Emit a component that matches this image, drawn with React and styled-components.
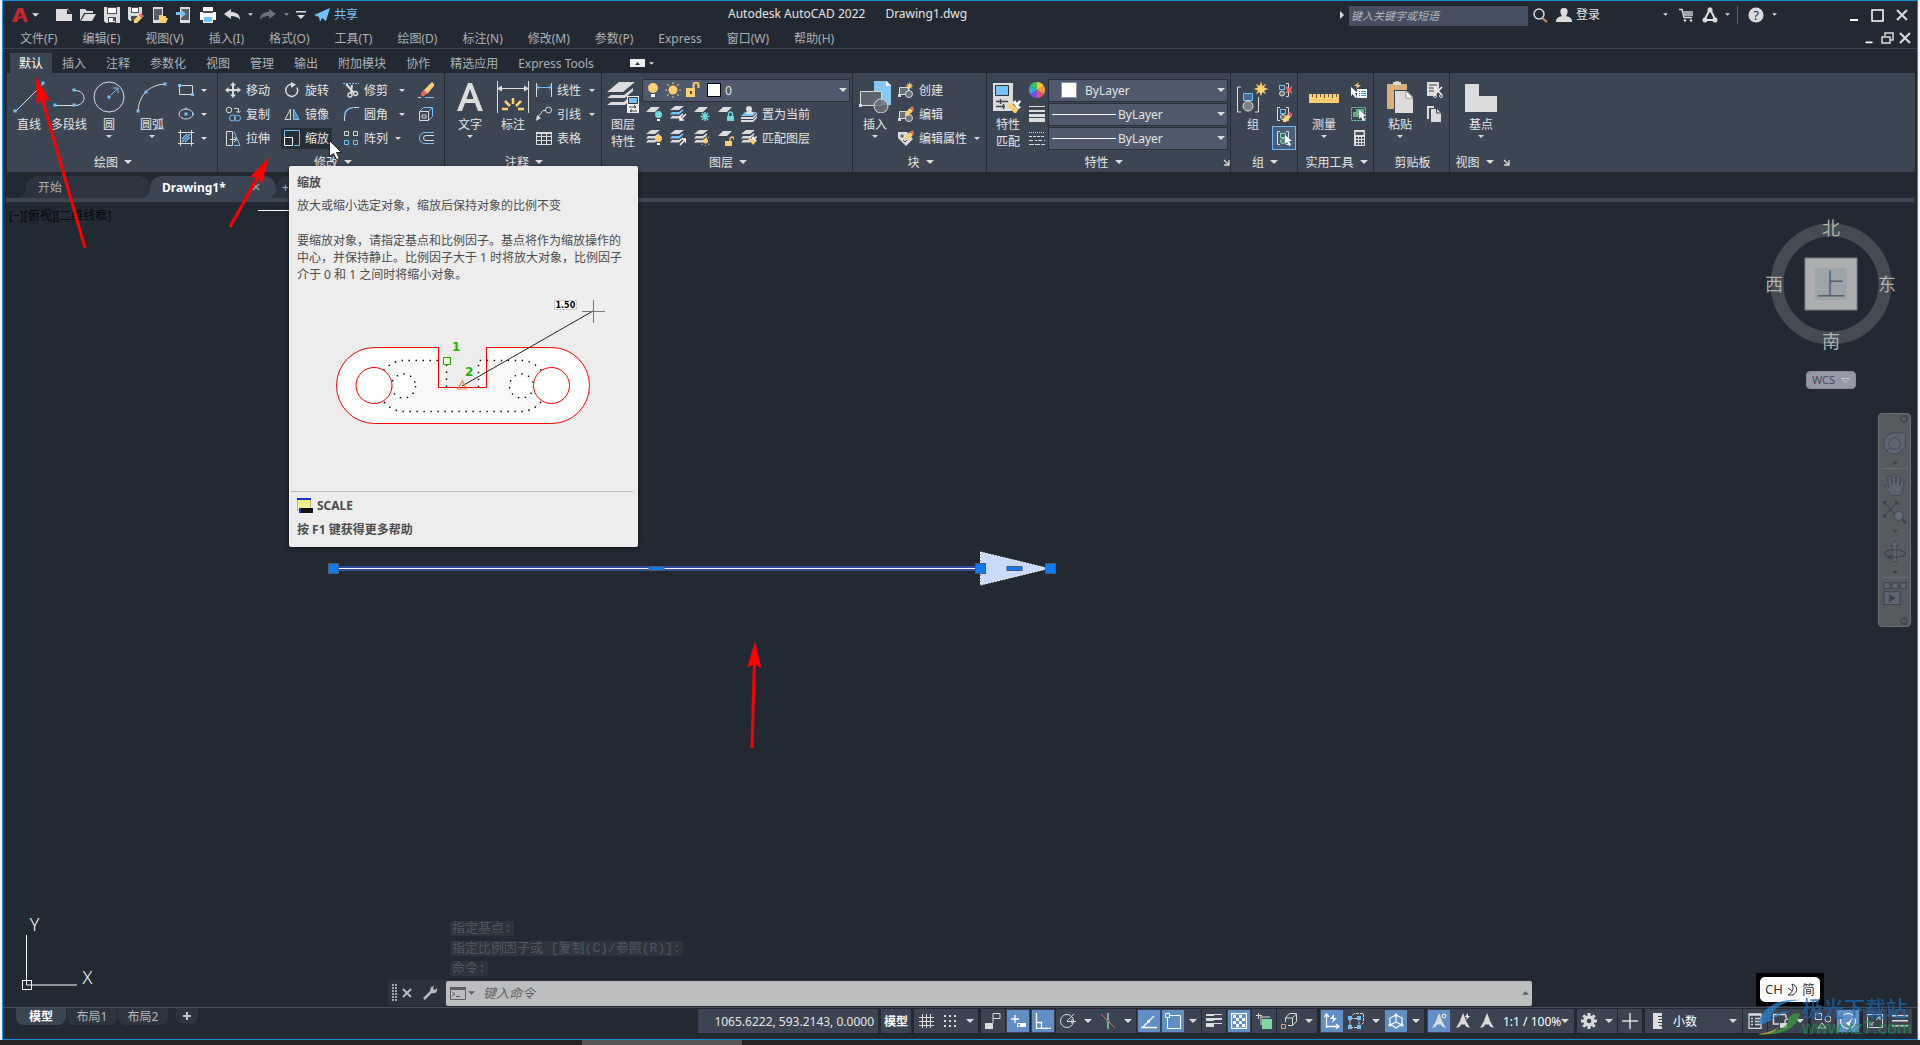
import React, { useState } from 'react';
import styled, { createGlobalStyle } from 'styled-components';

const W = '#dcdcdc';
const B = '#73c2fb';
const Y = '#ffcf70';
const R = '#f26060';
const G = '#7fd8a0';
const T = '#6fd8e0';

const GlobalStyle = createGlobalStyle`
  * {
    box-sizing: border-box;
  }
  body {
    margin: 0;
    background: #f4f5f6;
    font-family: 'Noto Sans', 'Noto Sans CJK SC', sans-serif;
    font-size: 12px;
    line-height: 17px;
    color: #e6e6e6;
  }
  button, input, select {
    font: inherit;
    color: inherit;
    margin: 0;
    padding: 0;
    border: none;
    background: none;
  }
  svg {
    display: block;
    flex: none;
  }
`;

const Page = styled.div`
  position: relative;
  display: flex;
  flex-direction: column;
  min-height: 100vh;
  overflow: hidden;
`;

const Window = styled.div`
  flex: 1;
  display: flex;
  flex-direction: column;
  margin: 0 2px;
  border: 1px solid #0f92d8;
  background: #222932;
`;

const DesktopStrip = styled.div`
  height: 5px;
  padding-left: 582px;
  background: #262224;
`;

const DesktopThumb = styled.div`
  width: 160px;
  height: 5px;
  background: #575455;
`;

const TitleBar = styled.header`
  position: relative;
  display: flex;
  align-items: center;
  justify-content: space-between;
  height: 27px;
  padding: 0 3px 0 10px;
`;

const QuickAccess = styled.div`
  display: flex;
  align-items: center;
`;

const IconButton = styled.button`
  display: flex;
  align-items: center;
  justify-content: center;
  width: ${({ $w }) => $w || 24}px;
  height: 24px;
`;

const ShareLink = styled.a`
  color: #79c0f5;
  text-decoration: none;
`;

const WindowTitle = styled.h1`
  position: absolute;
  left: 725px;
  top: 4px;
  display: flex;
  gap: 20px;
  margin: 0;
  font-size: 12px;
  font-weight: 400;
`;

const InfoCenter = styled.div`
  display: flex;
  align-items: center;
`;

const SearchInput = styled.input`
  width: 179px;
  height: 20px;
  margin-top: 2px;
  padding: 0 2px;
  background: #464f61;
  font-size: 11px;
  font-style: italic;

  &::placeholder {
    color: #b4b8be;
    opacity: 1;
  }
`;

const LoginButton = styled.button`
  width: 80px;
  text-align: left;
`;

const Divider = styled.span`
  width: 1px;
  height: 18px;
  margin: 0 6px 0 5px;
  background: #566074;
`;

const MenuBar = styled.nav`
  display: flex;
  align-items: center;
  height: 21px;
  padding: 0 3px 0 17px;
  border-bottom: 1px solid #3c4454;
`;

const MenuItem = styled.a`
  margin-right: 25px;
  color: #adb1b6;
  text-decoration: none;
`;

const DocControls = styled.div`
  display: flex;
  margin-left: auto;
`;

const RibbonTabs = styled.div`
  display: flex;
  align-items: flex-end;
  height: 24px;
  padding-left: 7px;
`;

const RibbonTab = styled.button`
  height: 20px;
  padding: 0 ${({ $active }) => ($active ? 9 : 10)}px;
  background: ${({ $active }) => ($active ? '#3c4554' : 'transparent')};
  color: ${({ $active }) => ($active ? '#fff' : '#aeb2b7')};
`;

const RibbonToggle = styled.button`
  display: flex;
  align-items: center;
  gap: 4px;
  height: 20px;
  margin-left: 26px;
`;

const Ribbon = styled.section`
  display: flex;
  height: 99px;
  margin: 0 2px 0 4px;
  background: #3c4554;
`;

const Panel = styled.div`
  display: flex;
  flex-direction: column;
  padding-left: ${({ $pad }) => $pad || 2}px;
  border-right: ${({ $last }) => ($last ? 'none' : '1px solid #252c37')};
`;

const PanelBody = styled.div`
  display: flex;
  height: 77px;
  padding-top: 5px;
`;

const PanelTitle = styled.div`
  display: flex;
  align-items: center;
  justify-content: center;
  height: 22px;
  padding-top: 2px;
  gap: 6px;
`;

const TitleButton = styled.button`
  flex: 1;
  display: flex;
  align-items: center;
  justify-content: center;
  gap: 6px;
`;

const LargeTool = styled.button`
  display: flex;
  flex-direction: column;
  align-items: center;
  width: ${({ $w }) => $w}px;
  padding-top: 3px;
  white-space: nowrap;

  span {
    width: 28px;
    margin-top: 3px;
    display: flex;
    flex-wrap: ${({ $wrap }) => ($wrap ? 'wrap' : 'nowrap')};
    justify-content: center;
    white-space: ${({ $wrap }) => ($wrap ? 'normal' : 'nowrap')};
  }

  svg + span + svg {
    margin-top: 2px;
  }
`;

const Column = styled.div`
  width: ${({ $w }) => $w}px;
  display: flex;
  flex-direction: column;
`;

const ToolRow = styled.div`
  display: flex;
  align-items: center;
  height: 24px;
`;

const SmallTool = styled.button`
  display: flex;
  align-items: center;
  gap: 5px;
  height: ${({ $selected }) => ($selected ? 22 : 21)}px;
  padding: 0 3px;
  white-space: nowrap;
  background: ${({ $hover, $selected }) => ($hover ? '#262e38' : $selected ? '#465d7c' : 'transparent')};
  outline: ${({ $selected }) => ($selected ? '1px solid #6fb8f2' : 'none')};
`;

const ArrowButton = styled.button`
  display: flex;
  justify-content: center;
  width: ${({ $w }) => $w || 16}px;
`;

const Combo = styled.div`
  position: relative;
  display: flex;
  align-items: center;
  width: ${({ $w }) => $w}px;
  height: 23px;
  border: 1px solid #2a313d;
  background: #4e596d;
  gap: 4px;
  padding-left: ${({ $pad }) => $pad}px;

  select {
    flex: 1;
    min-width: 0;
    height: 20px;
    appearance: none;
    outline: none;
  }

  select + svg {
    position: absolute;
    right: 2px;
    pointer-events: none;
  }
`;

const Swatch = styled.span`
  width: ${({ $s }) => $s}px;
  height: ${({ $s }) => $s}px;
  margin: 0 ${({ $gap }) => $gap}px 0 2px;
  border: 1px solid ${({ $edge }) => $edge};
  background: #fff;
`;

const LineSample = styled.span`
  width: 64px;
  height: 1px;
  margin-right: -2px;
  background: #fff;
`;

const DocTabs = styled.div`
  display: flex;
  align-items: flex-end;
  height: 30px;
  padding-left: 20px;
  margin: 0 3px;
  border-bottom: 4px solid #3c4554;
`;

const DocTab = styled.div`
  position: relative;
  display: flex;
  align-items: center;
  justify-content: space-between;
  width: ${({ $w }) => $w}px;
  height: 22px;
  padding: 0 16px 0 ${({ $w }) => ($w > 60 ? 12 : 6)}px;
  border-radius: 12px 12px 0 0;
  background: ${({ $active }) => ($active ? '#3c4554' : '#2d3440')};
  color: ${({ $active }) => ($active ? '#fff' : '#adb1b6')};
  font-weight: ${({ $active }) => ($active ? 700 : 400)};

  &::before {
    content: '';
    position: absolute;
    left: -9px;
    bottom: 0;
    width: 9px;
    height: 9px;
    background: radial-gradient(circle at 0 0, transparent 9px, ${({ $active }) => ($active ? '#3c4554' : '#2d3440')} 9px);
  }
`;

const Canvas = styled.main`
  position: relative;
  flex: 1;
  border-bottom: 1px solid #474e5a;
  background: #222932;
`;

const ViewLabel = styled.div`
  position: absolute;
  left: 6px;
  top: 5px;
  color: #07090b;
`;

const Sketch = styled.svg`
  position: absolute;
  left: 0;
  top: 0;
`;

const Ucs = styled.svg`
  position: absolute;
  left: 14px;
  bottom: 12px;
`;

const ViewCube = styled.div`
  position: absolute;
  right: 16px;
  top: 12px;
  display: flex;
  flex-direction: column;
  align-items: center;
  gap: 17px;
`;

const WcsButton = styled.button`
  display: flex;
  align-items: center;
  gap: 6px;
  height: 18px;
  padding: 0 5px;
  border-radius: 4px;
  background: #9698a6;
  border: 1px solid #8a8c99;
  color: #484b55;
  font-size: 11px;
  line-height: 14px;
`;

const NavBar = styled.div`
  position: absolute;
  right: 6px;
  top: 211px;
  display: flex;
  flex-direction: column;
  align-items: center;
  width: 33px;
  height: 214px;
  border: 1px solid #6a7074;
  border-radius: 4px;
  background: #565b60;
`;

const CommandArea = styled.div`
  position: absolute;
  left: 385px;
  right: 385px;
  bottom: 1px;
`;

const History = styled.div`
  display: flex;
  flex-direction: column;
  align-items: flex-start;
  gap: 5px;
  padding: 0 0 4px 62px;

  span {
    height: 15px;
    padding: 0 2px;
    border-radius: 2px;
    background: #2e343d;
    color: #50565e;
    font-family: 'Liberation Mono', 'Noto Sans CJK SC', monospace;
    font-size: 13px;
    line-height: 15px;
  }
`;

const CommandLine = styled.div`
  display: flex;
  align-items: center;
  height: 26px;
  border-radius: 2px;
  background: #2b313d;
`;

const CommandField = styled.div`
  flex: 1;
  display: flex;
  align-items: center;
  height: 25px;
  padding: 0 3px 0 4px;
  border-radius: 2px;
  background: #bcbdbf;

  input {
    flex: 1;
    padding-left: 7px;
    outline: none;
    font-size: 13px;
    font-style: italic;
    color: #333;
  }
  input::placeholder {
    color: #5f6265;
    opacity: 1;
  }
`;

const Footer = styled.footer`
  display: flex;
  justify-content: space-between;
  height: 31px;
  padding: 0 5px 0 13px;
`;

const LayoutTabs = styled.div`
  display: flex;
  align-items: flex-start;
  gap: 1px;
`;

const LayoutTab = styled.button`
  height: ${({ $plus }) => ($plus ? 16 : 17)}px;
  min-width: ${({ $plus }) => ($plus ? 22 : 50)}px;
  margin-left: ${({ $plus }) => ($plus ? 7 : 0)}px;
  padding: 0 ${({ $plus }) => ($plus ? 7 : 9)}px;
  border-radius: 0 0 8px 8px;
  background: ${({ $active }) => ($active ? '#3c4554' : '#2d3440')};
  color: ${({ $active }) => ($active ? '#fff' : '#b5b9be')};
  font-weight: ${({ $active }) => ($active ? 700 : 400)};
`;

const StatusBar = styled.div`
  display: flex;
  gap: 1px;
  padding-top: 1px;
`;

const StatusGroup = styled.div`
  display: flex;
  align-items: center;
  justify-content: ${({ $end }) => ($end ? 'flex-end' : 'center')};
  height: 24px;
  min-width: ${({ $w }) => $w || 24}px;
  margin-left: ${({ $apart }) => ($apart ? 2 : 0)}px;
  padding-right: ${({ $end }) => ($end ? 4 : 0)}px;
  background: #3c4454;
  white-space: nowrap;
`;

const StatusToggle = styled.button`
  display: flex;
  align-items: center;
  justify-content: center;
  width: 22px;
  height: 22px;
  margin: 0 1px;
  background: ${({ $on }) => ($on ? '#5f8fc4' : 'transparent')};
`;

const ModelToggle = styled.button`
  font-weight: 700;
  color: #fff;
`;

const StatusSelect = styled.label`
  position: relative;
  display: flex;
  align-items: center;

  select {
    width: ${({ $w }) => $w}px;
    padding-left: 4px;
    appearance: none;
    outline: none;
    color: #fff;
  }
  svg {
    position: absolute;
    right: 5px;
    pointer-events: none;
  }
`;

const Tooltip = styled.aside`
  position: absolute;
  left: 289px;
  top: 166px;
  width: 349px;
  padding: 8px 5px 9px 8px;
  border-radius: 2px;
  background: #ededed;
  box-shadow: 0 1px 4px rgba(0, 0, 0, 0.5);
  color: #4c4c4c;

  p {
    margin: 6px 6px 18px 0;
  }
  p + p {
    margin: 0 6px 0 0;
  }
  hr {
    margin: 0 0 5px -6px;
    border: none;
    border-top: 1px solid #b8b8b8;
  }
`;

const TipCommand = styled.div`
  display: flex;
  align-items: center;
  gap: 4px;
  margin-bottom: 7px;
  font-weight: 700;
`;

const Annotations = styled.svg`
  position: absolute;
  left: 0;
  top: 0;
  pointer-events: none;
`;

const Ime = styled.div`
  position: absolute;
  right: 96px;
  bottom: 39px;
  padding: 4px;
  background: #000;

  div {
    display: flex;
    align-items: center;
    justify-content: center;
    gap: 4px;
    width: 60px;
    height: 25px;
    border-radius: 5px;
    background: #fff;
    color: #333;
    font-size: 13px;
  }
`;

const Watermark = styled.div`
  position: absolute;
  right: 8px;
  bottom: 7px;
  display: flex;
  align-items: center;
  opacity: 0.75;
  pointer-events: none;
`;

const WatermarkText = styled.div`
  display: flex;
  flex-direction: column;
  color: #1668ae;
  font-size: 21px;
  line-height: 22px;
  font-weight: 500;

  small {
    color: #1f8a4c;
    font-family: 'Liberation Sans', sans-serif;
    font-size: 18px;
    line-height: 18px;
  }
`;

const Caret = ({ w = 7, up, fill = W }) => (
  <svg width={w} height={Math.ceil(w / 2)} viewBox="0 0 8 4">
    <path d={up ? 'M0 4h8L4 0z' : 'M0 0h8L4 4z'} fill={fill} />
  </svg>
);

const Dot = ({ x, y, s = 3 }) => <rect x={x - s / 2} y={y - s / 2} width={s} height={s} fill={B} />;
const Pencil = ({ x = 0, y = 0 }) => (
  <g transform={`translate(${x} ${y})`}>
    <path d="M0 7l5-5 3 3-5 5H0z" fill={Y} />
    <path d="M5 2l2-2 3 3-2 2z" fill={R} />
  </g>
);
const Sheet = ({ x = 0, y = 0 }) => <path transform={`translate(${x} ${y})`} d="M4 0h9L8 5H-1z" fill={W} />;
const Stack = ({ mid = W }) => (
  <>
    <path d="M5 0h9L9 4H0z" fill={W} />
    <path d="M2 6h7l4-3v2L9 8.500H0z" fill={mid} />
    <path d="M2 10h7l4-3v2l-4 3.500H0z" fill={W} />
  </>
);
const Bulb = ({ x, y, fill = Y }) => (
  <g transform={`translate(${x} ${y})`}>
    <circle cx="3.500" cy="3.500" r="3.500" fill={fill} />
    <path d="M2 8h3v2H2z" fill="#fff" />
  </g>
);
const Sun = ({ x, y, r = 3 }) => (
  <g transform={`translate(${x} ${y})`} stroke={Y} fill={Y}>
    <circle r={r} stroke="none" />
    {[0, 45, 90, 135, 180, 225, 270, 315].map((a) => (
      <path key={a} d={`M${r + 1.5} 0h${r / 2}`} transform={`rotate(${a})`} />
    ))}
  </g>
);
const Star = ({ x, y, s = 1 }) => (
  <path
    transform={`translate(${x} ${y}) scale(${s})`}
    d="M0-5l1 3 2.600-1.600L2-1l3 1-3 1 1.600 2.600L1 2 0 5l-1-3-2.600 1.600L-2 1l-3-1 3-1-1.600-2.600L-1-2z"
    fill={Y}
  />
);
const Lock = ({ x, y, fill = Y, open }) => (
  <g transform={`translate(${x} ${y})`}>
    <rect y="4" width="7" height="5" fill={fill} />
    <path d={open ? 'M5 4V2a2 2 0 0 1 4 0v1' : 'M1.500 4V2a2 2 0 0 1 4 0v2'} fill="none" stroke={fill} strokeWidth="1.300" />
  </g>
);
const Cursor = ({ x, y }) => <path transform={`translate(${x} ${y})`} d="M0 0v9l2-2 2 4 2-1-2-4h3z" fill="#fff" />;
const Brush = ({ x, y, s = 1 }) => (
  <g transform={`translate(${x} ${y}) scale(${s})`}>
    <path d="M0 4l3-2 5 5-2 3z" fill={Y} />
    <path d="M4 2l2-2 1 2 2-2 1 1-2 3 2 1-2 2z" fill="#fff" />
  </g>
);
const BlockShape = () => (
  <>
    <path d="M1.500 5.500h9v7h-9z" fill="#6b717b" stroke={W} />
    <circle cx="11" cy="12" r="3.500" fill="#6b717b" stroke={W} />
    <rect x="0" y="12" width="3" height="3" fill={W} />
  </>
);
const GroupShape = ({ c = B }) => (
  <>
    <path d="M4 1.500H1.500v13H4M10 1.500h2.500v13H10" fill="none" stroke={W} />
    <rect x="4.500" y="3.500" width="5" height="4" fill="none" stroke={c} />
    <circle cx="7" cy="11" r="2.500" fill="#6b717b" stroke={c === B ? W : c} />
  </>
);
const Man = () => <path d="M8 0l2 5 1 3 4 7-4-1.500-1-2H6l-1 2L1 15l4-7 1-3z" fill={W} />;

// every glyph is drawn on a 16px or 32px grid
const glyphs = {
  logo: <path d="M0 15L6 1h5l5 14h-4l-1-4-5 1-1 3zM8 5l-2 5 4-1z" fill="#c8282d" />,
  fileNew: <path d="M0 2h11l5 5v7H0zM11 1v6h5z" fill={W} />,
  open: <path d="M0 14V2h5l2 2h6v2H4zM1 14L5 7h11l-4 7z" fill={W} />,
  save: <><path d="M0 0h16v16H2l-2-2z" fill={W} /><path d="M3 0h10v7H3zM4 10h8v6H4z" fill="#4b5058" /><path d="M4 1h8v5H4zM5 11h6v4H5z" fill="#fff" /><path d="M9 11h2v3H9z" fill="#4b5058" /></>,
  saveAs: <><path d="M0 0h14v7l-6 7H2l-2-2z" fill={W} /><path d="M3 0h8v6H3zM3 9h6v5H3z" fill="#4b5058" /><path d="M4 1h6v4H4z" fill="#fff" /><Pencil x={6} y={6} /></>,
  webOpen: <><path d="M1 0h10v16H1z" fill={W} /><path d="M2 2h8v11H2z" fill="#5a5e64" /><path d="M7 16V8h3l1 1h3v2h2l-2 5z" fill={Y} /></>,
  webSave: <><path d="M4 0h10v16H4z" fill={W} /><path d="M5 2h8v11H5z" fill="#5a5e64" /><path d="M0 5h5V2l5 5-5 4V8H0z" fill={B} /></>,
  print: <><path d="M3 0h10v4H3zM0 5h16v8H0z" fill="#fff" /><path d="M3 4h10v2H3z" fill="#4b5058" /><path d="M3 9h10v7H3z" fill="#fff" /><path d="M4 10h8v5H4z" fill={B} /></>,
  undo: <path d="M0 7l7-5v3c5 0 9 2 9 8-2-3-5-4-9-4v3z" fill={W} />,
  redo: <path d="M16 7L9 2v3C4 5 0 7 0 13c2-3 5-4 9-4v3z" fill="#6a7078" />,
  customize: <path d="M3 4h10v1.500H3zM4 8h8l-4 4z" fill={W} />,
  send: <path d="M0 8L16 1l-4 13-4-3-2 4-1-5zM5 10l7-6-5 7z" fill={B} />,
  search: <><circle cx="7" cy="7" r="5" fill="none" stroke={W} strokeWidth="1.500" /><path d="M10 11l5 4" stroke="#c79c6a" strokeWidth="2" /></>,
  user: <path d="M8 1c3 0 4 2 3.500 4.500C11 8 10 9 10 9c4 1 6 2 6 6H0c0-4 2-5 6-6 0 0-1-1-1.500-3.500C4 3 5 1 8 1z" fill={W} />,
  cart: <><path d="M1 2.500h3l2 8h8" fill="none" stroke={W} strokeWidth="1.400" /><path d="M5 4h10v5H6z" fill="#a2a5aa" /><circle cx="7" cy="13.500" r="1.300" fill={W} /><circle cx="13" cy="13.500" r="1.300" fill={W} /></>,
  apps: <><path d="M8 2L2.500 13h11z" fill="none" stroke={W} strokeWidth="2" /><circle cx="8" cy="3" r="2.500" fill={W} /><circle cx="3" cy="13" r="2.500" fill={W} /><circle cx="13" cy="13" r="2.500" fill={W} /></>,
  min: <path d="M4 12h8v2H4z" fill="#fff" />,
  max: <path d="M2 3h11v11H2z" fill="none" stroke="#fff" strokeWidth="1.500" />,
  close: <path d="M3 3l10 10M13 3L3 13" stroke={W} strokeWidth="2" />,
  restore: <path d="M6 6V3h8v7h-3M3 7h8v6H3z" fill="none" stroke={W} strokeWidth="1.500" />,

  line: <><path d="M2 31L31 2" stroke={W} /><Dot x={2} y={30} /><Dot x={30} y={2} /></>,
  polyline: <><path d="M2 24.500h20c12 0 12-15 0-15" fill="none" stroke={W} /><Dot x={2} y={24} /><Dot x={21} y={24} /><Dot x={21} y={9} /></>,
  circle: <><circle cx="16" cy="16" r="15" fill="none" stroke={W} /><Dot x={16} y={16} /><path d="M18 14l7-7M20 7h5v5" fill="none" stroke={B} /></>,
  arc: <><path d="M2 30C3 15 12 4 29 3" fill="none" stroke={W} /><Dot x={2} y={30} /><Dot x={10} y={11} /><Dot x={29} y={3} /></>,
  rect: <><path d="M1.500 3.500h13v9h-13z" fill="none" stroke={W} /><Dot x={1.500} y={3.500} /><Dot x={14.500} y={12.500} /></>,
  ellipse: <><ellipse cx="8" cy="8" rx="7" ry="5" fill="none" stroke={W} /><Dot x={8} y={8} /><Dot x={8} y={2.500} s={2} /><Dot x={15} y={8} s={2} /></>,
  hatch: <><path d="M2.500 0v16M13.500 0v16M0 2.500h16M0 13.500h16" stroke={W} /><path d="M4 9l5-5M4 12l8-8M7 12l5-5" stroke={B} strokeWidth="1.300" /></>,
  move: <path d="M8 0l3 3.500H9V7h3.500V5L16 8l-3.500 3V9H9v3.500h2L8 16l-3-3.500h2V9H3.500v2L0 8l3.500-3v2H7V3.500H5z" fill={W} />,
  rotate: <><path d="M9 2.500a6 6 0 1 0 4 3" fill="none" stroke={W} strokeWidth="1.500" /><path d="M7 0l5 2.500L7 6z" fill={W} /></>,
  copy: <><circle cx="4" cy="4" r="2.800" fill="none" stroke={W} /><path d="M9 2.500h4.500V6M11.500 5l2 2 2-2" fill="none" stroke={W} /><circle cx="7.500" cy="12" r="3" fill="none" stroke={B} /><circle cx="12.500" cy="12" r="3" fill="none" stroke={B} /></>,
  mirror: <><path d="M6.500 3v10.500H1z" fill="none" stroke={W} /><path d="M9.500 3v10.500H15z" fill="#4c88b8" stroke={B} /></>,
  stretch: <><path d="M1.500 1.500h6v14h-6z" fill="none" stroke={W} /><path d="M9 1.500l6 14H9" fill="none" stroke={B} /><path d="M5 9.500h6M9 7l3 2.500L9 12" fill="none" stroke={W} /></>,
  scale: <><path d="M.5 7V.500h15v15H10" fill="none" stroke={B} /><path d="M.5 7.500h8v8h-8z" fill="none" stroke="#fff" /></>,
  trim: <><path d="M0 1.500h16" stroke={B} strokeDasharray="2 1" /><path d="M3 2l8 9M9 3l-1 8" stroke={W} strokeWidth="2" /><circle cx="7" cy="13" r="2" fill="none" stroke={W} strokeWidth="1.500" /><circle cx="12.500" cy="11.500" r="2" fill="none" stroke={W} strokeWidth="1.500" /></>,
  fillet: <><path d="M1.500 15v-4" stroke={W} /><path d="M1.500 11c0-6 4-9 9-9.500" fill="none" stroke={B} strokeWidth="1.500" /><path d="M11 1.500h5" stroke={W} /></>,
  array: <g fill="none"><path d="M1.500 1.500h4v4h-4zM10.500 1.500h4v4h-4z" stroke={W} /><path d="M1.500 10.500h4v4h-4zM10.500 10.500h4v4h-4z" stroke={B} /></g>,
  erase: <><path d="M5 9L14 0l2 2v2l-7 8z" fill={Y} /><path d="M3 11l3-3 3 3-3 3c-2 1-4-1-3-3z" fill={R} /><path d="M0 15.500h3" stroke={W} /><path d="M7 15.500h9" stroke={B} /></>,
  explode: <><path d="M1.500 5.500h9v9h-9zM4 9h4v3H4z" fill="none" stroke={W} /><path d="M1.500 5.500l4-4h9l-4 4M14.500 1.500v9l-4 4" fill="none" stroke={B} /></>,
  offset: <><path d="M16 2.500H7a5.500 5.500 0 0 0 0 11h9" fill="none" stroke={B} /><path d="M16 5.500H8a2.500 2.500 0 0 0 0 5h8" fill="none" stroke={W} /></>,
  text: <path d="M3 30L14 2h4l11 28h-5l-3-8H11l-3 8zM12.500 18h7L16 8z" fill={W} />,
  dimension: <><path d="M.5 0v32M31.500 0v32M1 7.500h30" stroke={W} /><path d="M0 7.500l5-3v6zM32 7.500l-5-3v6z" fill={W} /><path d="M5 28h6M21 28h6M16 17v6M8 20l5 5M24 20l-5 5" stroke={Y} strokeWidth="2.500" /></>,
  linear: <><path d="M.5 1v14M15.500 1v14" stroke={W} /><path d="M1 5.500h14M3 3.500l-2 2 2 2M13 3.500l2 2-2 2" fill="none" stroke={B} /></>,
  leader: <><circle cx="12.500" cy="4" r="3" fill="none" stroke={W} /><path d="M9.500 4.500H7L2 11" fill="none" stroke={W} /><path d="M0 15l1-6 4 3z" fill={W} /></>,
  table: <><path d="M.5 2.500h15v12H.500zM0 6.500h16M0 10.500h16M5.500 3v12M10.500 3v12" fill="none" stroke={W} /><path d="M0 2h16v2H0z" fill={W} /></>,
  layers: <><path d="M12 1h16L16 11H0zM4 14h13l9-7v3l-8 7H0zM4 21h13l3-3v4l-2 2H0z" fill={W} /><path d="M20 15h12v17H20z" fill="#eee" /><path d="M21.500 16.500h9v6h-9z" fill={B} stroke="#333" /><path d="M22 26h7M27 24l2 2-2 1M30 30h-7M25 28l-2 2 2 1" fill="none" stroke="#444" /></>,
  bulb: <><circle cx="8" cy="6" r="5" fill={Y} /><path d="M6 12h4v3H6z" fill="#fff" /></>,
  sun: <Sun x={8} y={8} r={4.5} />,
  unlock: <><path d="M1 6h9v9H1z" fill={Y} /><path d="M8.500 6V3a2.500 2.500 0 0 1 5 0v3" fill="none" stroke={Y} strokeWidth="2" /><path d="M5 9h2v3H5z" fill="#5a4a20" /></>,
  lyOff: <><Sheet x={1} y={1} /><Bulb x={9} y={5} fill={T} /></>,
  lyIso: <><Stack mid={B} /><path d="M16 8l-6 6M10 10v4h4" fill="none" stroke="#fff" strokeWidth="1.500" /></>,
  lyFreeze: <><Sheet x={1} y={1} /><path d="M11 6v9M6.500 10.500h9M8 7l6 7M14 7l-6 7" stroke={T} strokeWidth="1.500" /></>,
  lyLock: <><Sheet x={1} y={1} /><Lock x={9} y={6} fill={T} /></>,
  lyCur: <><path d="M4 6h12l-4 4H0z" fill={B} /><path d="M0 11h12l4-4v2l-4 4H0z" fill={W} /><path d="M0 14h12l4-4v2l-4 4H0z" fill={W} /><circle cx="8" cy="3" r="3" fill={W} /><path d="M5 8h7V6l-2-1H7L5 6z" fill={W} /></>,
  lyOn: <><Stack /><Bulb x={9} y={5} /></>,
  lyUniso: <><Stack mid={B} /><path d="M10 15l6-6M12 9h4v4" fill="none" stroke="#fff" strokeWidth="1.500" /></>,
  lyThaw: <><Stack /><Sun x={11.5} y={11} r={2.5} /></>,
  lyUnlock: <><Sheet x={1} y={1} /><Lock x={7} y={7} open /></>,
  lyMatch: <><Stack /><Brush x={7} y={6} s={0.9} /></>,
  insert: <><path d="M15 0h13l4 4v20H15z" fill="#86c9f9" /><path d="M27 0v5h5z" fill="#fff" /><path d="M1.500 10.500h21v14h-21z" fill="#5c6470" stroke={W} /><circle cx="22" cy="25" r="7" fill="#6b717b" fillOpacity=".8" stroke={W} /><rect y="23" width="3" height="3" fill={W} /></>,
  create: <><BlockShape /><Star x={11.5} y={4} s={0.8} /></>,
  edit: <><BlockShape /><Pencil x={7} y={0} /></>,
  attrib: <><path d="M0 2h9l6 7-7 7-8-8z" fill={W} /><path d="M3 5h2v2H3zM5 10l2 2 4-4" fill="none" stroke="#3c4554" /><Pencil x={7} y={0} /></>,
  match: <><path d="M1 2h20v28H1z" fill={W} /><path d="M3.500 4.500h13v10h-13z" fill={B} stroke="#333" /><path d="M4 20.500h12M4 25.500h9M8.500 18v5M11.500 23v5" stroke="#444" strokeWidth="1.500" /><Brush x={15} y={19} s={1.4} /></>,
  wheel: <g>{['#fdc02f', '#f59a3c', '#ea4f66', '#7a4df0', '#3aa8e0', '#34c46a'].map((c, i) => (
    <path key={c} transform={`rotate(${i * 60} 8 8)`} d="M8 8V0a8 8 0 0 1 6.930 4z" fill={c} />
  ))}</g>,
  weights: <path d="M0 0h16v1H0zM0 4h16v2H0zM0 8h16v3H0zM0 12h16v4H0z" fill={W} />,
  types: <><path d="M0 2.500h16" stroke={W} strokeDasharray="1 1" /><path d="M0 6.500h16" stroke={W} strokeDasharray="3 1" /><path d="M0 10.500h16" stroke={W} strokeDasharray="4 2 2 1" /><path d="M0 14.500h16" stroke={W} strokeDasharray="5 1" /></>,
  group: <><path d="M4 6H.500v25H4M18 31h3.500V16" fill="none" stroke={W} /><path d="M6.500 12.500h9v7h-9z" fill="#4a6d91" stroke={B} /><circle cx="11" cy="25" r="5" fill="#7a7f87" stroke={W} /><Star x={24} y={8} s={1.5} /></>,
  ungroup: <><path d="M10 1.500h2.500v13H10" fill="none" stroke={W} /><rect x="3.500" y="3.500" width="5" height="4" fill="none" stroke={B} /><circle cx="6" cy="11.500" r="2.500" fill="#6b717b" stroke={W} /><path d="M10 5l6 6M16 5l-6 6" stroke={R} strokeWidth="2" /></>,
  groupEdit: <><GroupShape /><Pencil x={7} y={6} /></>,
  groupSel: <><GroupShape c={G} /><Cursor x={9} y={5} /></>,
  ruler: <><path d="M1 13h30v9H1z" fill={Y} /><path d="M4.500 13v3M8.500 13v4M12.500 13v3M16.500 13v4M20.500 13v3M24.500 13v4M28.500 13v3" stroke="#6b5a35" /></>,
  quick: <><Cursor x={0} y={5} /><path d="M6 7h10v9H6z" fill="#fff" /><path d="M8 9.500h1M10 9.500h5M8 11.500h1M10 11.500h5M8 13.500h1M10 13.500h5" stroke="#3090d8" /><path d="M8 0L3 4h3l-1 3 5-4H7z" fill={Y} /></>,
  selAll: <><path d="M.5 1.500h14v13H.500z" fill="none" stroke={G} strokeDasharray="2 1" /><path d="M2 6h3V3h8v8H2z" fill={G} opacity=".7" /><Cursor x={8} y={4} /></>,
  calc: <><path d="M3 0h11v16H3z" fill={W} /><path d="M4.500 2h8v3h-8zM5 7h2v2H5zM8 7h2v2H8zM11 7h2v2h-2zM5 10h2v2H5zM8 10h2v2H8zM11 10h2v2h-2zM5 13h2v2H5zM8 13h2v2H8zM11 13h2v2h-2z" fill="#4b5058" /></>,
  paste: <><path d="M3 3h6V1h2V0h4v1h2v2h6v6H10v19H3z" fill="#dcae78" /><path d="M9 1h8v3H9zM11 10h12l6 6v16H11z" fill={W} /><path d="M22 10v7h7z" fill="#fff" stroke="#555" strokeWidth=".5" /></>,
  cut: <><path d="M0 0h12v6l-3 8H0z" fill={W} /><path d="M2 3h8M2 6h5M2 9h5" stroke="#444" /><path d="M7 5l8 8M15 5l-8 8" stroke="#fff" strokeWidth="1.500" /><circle cx="8" cy="14" r="1.500" fill="none" stroke={W} /><circle cx="14" cy="14" r="1.500" fill="none" stroke={W} /></>,
  copyClip: <><path d="M0 0h7v2H2v11H0z" fill={W} /><path d="M4 3h6l4 4v9H4z" fill={W} /><path d="M9.500 2.500V7H14" fill="none" stroke="#3c4554" /></>,
  base: <path d="M0 4h14v12h18v16H0z" transform="translate(0 -1)" fill={W} />,

  // navigation bar
  navWheel: <><path d="M16 1h11c2 0 4 1 4 3v12A15 15 0 1 1 16 1z" fill="#5d6370" stroke="#3e434c" /><circle cx="16" cy="16" r="8" fill="none" stroke="#3e434c" /><path d="M10 22l-5 5M22 22l5 5" stroke="#3e434c" /></>,
  navPan: <path d="M10 30c-1-5-6-9-8-13 1-2 4-1 6 2L6 6c1-3 4-2 4 1l2 8V3c1-3 4-2 4 0l1 12 2-11c1-2 4-1 4 1l-1 12 3-7c1-2 4-1 3 2-2 7-1 12-5 18z" fill="#5d6370" stroke="#3e434c" />,
  navZoom: <><path d="M2 2l16 18M18 2L2 20" stroke="#3e434c" strokeWidth="1.500" /><path d="M0 0h6L0 6zM20 0h-6l6 6zM0 22h6l-6-6z" fill="#3e434c" /><circle cx="21" cy="20" r="6" fill="#666c76" stroke="#3e434c" /><path d="M25 24l6 6" stroke="#3e434c" strokeWidth="3" /></>,
  navOrbit: <><path d="M16 1l5 6h-3v22h-5V7h-3z" fill="#5d6370" stroke="#3e434c" /><ellipse cx="16" cy="18" rx="14" ry="5" fill="none" stroke="#3e434c" strokeWidth="1.500" /><path d="M4 23l7-5v9z" fill="#3e434c" /></>,
  navMotion: <><path d="M1 1h8v8H1zM12 1h8v8h-8zM23 1h8v8h-8zM1 13h22v17H1z" fill="#5d6370" stroke="#3e434c" strokeWidth="1.500" /><path d="M8 16l9 5.500-9 5.500z" fill="#3e434c" /></>,

  // status bar
  grid: <path d="M4.500 1v14M8.500 1v14M12.500 1v14M1 4.500h15M1 8.500h15M1 12.500h15" stroke={W} />,
  snap: <path d="M2 2h2v2H2zM7 2h2v2H7zM12 2h2v2h-2zM2 7h2v2H2zM7 7h2v2H7zM12 7h2v2h-2zM2 12h2v2H2zM7 12h2v2H7zM12 12h2v2h-2z" fill={W} />,
  infer: <><path d="M0 10h8v6H0z" fill={W} /><path d="M8 10V.500h7v5H8" fill="none" stroke={W} /></>,
  dyn: <><path d="M1 6h8M5 2v8" stroke="#fff" strokeWidth="1.300" /><path d="M7 10h9v4H7z" fill="#fff" /><path d="M8 11h2v2H8z" fill="#5f8fc4" /></>,
  ortho: <path d="M1.500 0v15.500H16M1.500 9.500h5v6" fill="none" stroke="#fff" strokeWidth="1.300" />,
  polar: <><circle cx="7" cy="8" r="6.500" fill="none" stroke={W} /><path d="M7 8.500h9M7 8l7-7M12 6v5" stroke={W} fill="none" /></>,
  iso: <><path d="M1 1l14 14" stroke={R} /><path d="M8 0v16" stroke={G} strokeWidth="1.500" /><path d="M7 7h2v2H7z" fill="#222" stroke={W} strokeWidth=".5" /></>,
  track: <><path d="M0 14.500h16M2 14L13 3" stroke="#fff" strokeWidth="1.300" /><path d="M6 7h3v3H6z" fill="#fff" /></>,
  osnap: <path d="M.5.500h4v4h-4zM4 2.500h11.500v13h-13V5" fill="none" stroke="#fff" />,
  lineweight: <path d="M0 1h16v1H8v1H0zM0 5h16v2H8v1H0zM0 10h16v1H8v3H0z" fill={W} />,
  transp: <><path d="M.5.500h15v15H.500z" fill="none" stroke="#fff" strokeWidth="1.300" /><path d="M2 2h3v3H2zM8 2h3v3H8zM5 5h3v3H5zM11 5h3v3h-3zM2 8h3v3H2zM8 8h3v3H8zM5 11h3v3H5zM11 11h3v3h-3z" fill="#fff" /></>,
  cycle: <><path d="M0 2.500h6M2.500 0v6M4 4h10M5 4v8" stroke={W} fill="none" /><path d="M6 6h10v10H6z" fill={G} /></>,
  osnap3d: <><path d="M4.500 9V5l4-4.500h7v8l-4 4H7M4.500 5h7v7M11.500 5l4-4" fill="none" stroke={W} /><path d="M.5 11.500h4v4h-4z" fill="none" stroke="#f29b5c" /></>,
  ducs: <><path d="M2.500 15V2M2 13.500h12M0 4l2.500-3L5 4M12 11l3 2.500-3 2.500" fill="none" stroke="#fff" strokeWidth="1.300" /><path d="M10 1L6 6h3l-1 4 5-5h-3z" fill="#fff" /></>,
  filter: <><path d="M2 5.500h9v9H2zM2 5l4-4.500h9.500v9l-4 4" fill="none" stroke={W} strokeDasharray="3 1" /><Dot x={2} y={5} s={4} /><Dot x={11} y={5} s={4} /><Dot x={2} y={14} s={4} /><Dot x={11} y={14} s={4} /></>,
  gizmo: <><path d="M8 2l6 3v6l-6 4-6-4V5zM8 2v7M8 9l6 3M8 9l-6 3" fill="none" stroke="#fff" strokeWidth="1.200" /><circle cx="8" cy="2" r="1.500" fill="#fff" /><circle cx="2" cy="12" r="1.500" fill="#fff" /><circle cx="14" cy="12" r="1.500" fill="#fff" /></>,
  annoVis: <><Man /><circle cx="13" cy="3" r="2" fill="#5f8fc4" stroke="#fff" /></>,
  annoAuto: <><Man /><path d="M13 0l-3 4h2l-1 3 4-4h-2z" fill="#fff" /></>,
  anno: <Man />,
  gear: <><circle cx="8" cy="8" r="4" fill="none" stroke={W} strokeWidth="3.500" /><path d="M8 0v3M8 13v3M0 8h3M13 8h3M2.300 2.300l2 2M11.700 11.700l2 2M2.300 13.700l2-2M11.700 4.300l2-2" stroke={W} strokeWidth="3" /></>,
  plus: <path d="M0 8h16M8 0v16" stroke={W} strokeWidth="1.500" />,
  units: <path d="M4 0h9v3h-4v1h4v2h-3v1h3v2h-4v1h4v2h-3v1h3v3H4z" fill={W} />,
  props: <path d="M2 1h12v14.500H2zM2 2h12M4 5.500h2M8 5.500h5M4 8.500h2M8 8.500h5M4 11.500h2M8 11.500h5" fill="none" stroke={W} strokeWidth="1.300" />,
  lockUi: <><path d="M1 1.500h13M1.500 2v9H7M14 2v3" fill="none" stroke={W} strokeWidth="1.500" /><Lock x={8} y={6} fill={W} open /></>,
  isolate: <g fill="none" stroke={W}><path d="M.5.500h6v6h-6z" /><circle cx="13" cy="6" r="3" /><path d="M7 10l4 5H3z" /></g>,
  perf: <><circle cx="8" cy="8" r="7.500" fill="none" stroke="#fff" /><path d="M7 11l6-7-4 8z" fill="#fff" /><circle cx="8" cy="11" r="2" fill="#fff" /></>,
  clean: <path d="M.5 1.500h15v13H.500zM9 7l4-3M10 4h3v3M7 9l-4 3M3 9v3h3" fill="none" stroke={W} />,
  menu: <path d="M0 2h16v1.500H0zM0 7h16v1.500H0zM0 12h16v1.500H0z" fill={W} />,
};

const Icon = ({ name, size = 16, grid }) => (
  <svg width={size} height={size} viewBox={`0 0 ${grid || size} ${grid || size}`}>
    {glyphs[name]}
  </svg>
);

function Large({ icon, label, w, wrap, arrow }) {
  return (
    <LargeTool $w={w} $wrap={wrap}>
      <Icon name={icon} size={32} />
      <span>{label}</span>
      {arrow && <Caret w={6} />}
    </LargeTool>
  );
}

function Tool({ icon, label, arrow, aw, hover, selected }) {
  return (
    <ToolRow>
      <SmallTool $hover={hover} $selected={selected} title={label || icon}>
        <Icon name={icon} />
        {label && <span>{label}</span>}
      </SmallTool>
      {arrow && (
        <ArrowButton $w={aw} aria-label="more">
          <Caret w={6} />
        </ArrowButton>
      )}
    </ToolRow>
  );
}

const Launcher = () => (
  <svg width="7" height="7" viewBox="0 0 7 7">
    <path d="M1 1l4 4M6 1v5H1" fill="none" stroke={W} strokeWidth="1.300" />
  </svg>
);

function RibbonPanel({ title, arrow = true, launcher, pad, last, children }) {
  return (
    <Panel $pad={pad} $last={last}>
      <PanelBody>{children}</PanelBody>
      <PanelTitle>
        <TitleButton>
          {title}
          {arrow && <Caret w={8} />}
        </TitleButton>
        {launcher && <Launcher />}
      </PanelTitle>
    </Panel>
  );
}

const menus = ['文件(F)', '编辑(E)', '视图(V)', '插入(I)', '格式(O)', '工具(T)', '绘图(D)', '标注(N)', '修改(M)', '参数(P)', 'Express', '窗口(W)', '帮助(H)'];
const tabs = ['默认', '插入', '注释', '参数化', '视图', '管理', '输出', '附加模块', '协作', '精选应用', 'Express Tools'];

function Header() {
  return (
    <>
      <TitleBar>
        <QuickAccess>
          <IconButton $w={13} aria-label="AutoCAD"><Icon name="logo" /></IconButton>
          <IconButton $w={18} aria-label="application menu"><Caret w={7} /></IconButton>
          <IconButton $w={8} aria-hidden="true" />
          {['fileNew', 'open', 'save', 'saveAs', 'webOpen', 'webSave', 'print', 'undo'].map((n) => (
            <IconButton key={n} title={n}><Icon name={n} /></IconButton>
          ))}
          <IconButton $w={12} aria-label="undo list"><Caret w={5} /></IconButton>
          <IconButton title="redo"><Icon name="redo" /></IconButton>
          <IconButton $w={12} aria-label="redo list"><Caret w={5} fill="#8a8f96" /></IconButton>
          <IconButton $w={18} title="customize"><Icon name="customize" /></IconButton>
          <IconButton title="send"><Icon name="send" /></IconButton>
          <ShareLink href="#share">共享</ShareLink>
        </QuickAccess>
        <WindowTitle>
          <span>Autodesk AutoCAD 2022</span>
          <span>Drawing1.dwg</span>
        </WindowTitle>
        <InfoCenter>
          <IconButton $w={14} aria-label="collapse search">
            <svg width="4" height="8"><path d="M0 0l4 4-4 4z" fill={W} /></svg>
          </IconButton>
          <SearchInput placeholder="键入关键字或短语" aria-label="search" />
          <IconButton title="search"><Icon name="search" /></IconButton>
          <IconButton title="user"><Icon name="user" /></IconButton>
          <LoginButton>登录</LoginButton>
          <IconButton $w={18} aria-label="account menu"><Caret w={5} /></IconButton>
          <IconButton title="cart"><Icon name="cart" /></IconButton>
          <IconButton title="apps"><Icon name="apps" /></IconButton>
          <IconButton $w={10} aria-label="apps menu"><Caret w={5} /></IconButton>
          <Divider />
          <IconButton title="help">
            <svg width="16" height="16">
              <circle cx="8" cy="8" r="7.500" fill={W} />
              <text x="8" y="13" textAnchor="middle" fontSize="13" fill="#222932">?</text>
            </svg>
          </IconButton>
          <IconButton $w={12} aria-label="help menu"><Caret w={5} /></IconButton>
          <IconButton $w={62} aria-hidden="true" />
          <IconButton title="minimize"><Icon name="min" /></IconButton>
          <IconButton title="maximize"><Icon name="max" /></IconButton>
          <IconButton title="close"><Icon name="close" /></IconButton>
        </InfoCenter>
      </TitleBar>
      <MenuBar>
        {menus.map((m) => (
          <MenuItem key={m} href="#menu">{m}</MenuItem>
        ))}
        <DocControls>
          <IconButton $w={18} title="minimize drawing"><Icon name="min" size={14} grid={16} /></IconButton>
          <IconButton $w={18} title="restore drawing"><Icon name="restore" /></IconButton>
          <IconButton $w={18} title="close drawing"><Icon name="close" /></IconButton>
        </DocControls>
      </MenuBar>
    </>
  );
}

function RibbonArea() {
  const [active, setActive] = useState('默认');

  return (
    <>
      <RibbonTabs>
        {tabs.map((t) => (
          <RibbonTab key={t} $active={t === active} onClick={() => setActive(t)}>{t}</RibbonTab>
        ))}
        <RibbonToggle aria-label="minimize ribbon">
          <svg width="15" height="8">
            <rect width="15" height="8" fill="#eee" />
            <path d="M5 6h5L7.500 3z" fill="#333" />
          </svg>
          <Caret w={5} />
        </RibbonToggle>
      </RibbonTabs>
      <Ribbon>
        <RibbonPanel title="绘图">
          <Large icon="line" label="直线" w={40} />
          <Large icon="polyline" label="多段线" w={40} />
          <Large icon="circle" label="圆" w={40} arrow />
          <Large icon="arc" label="圆弧" w={46} arrow />
          <Column $w={42}>
            <Tool icon="rect" arrow aw={14} />
            <Tool icon="ellipse" arrow aw={14} />
            <Tool icon="hatch" arrow aw={14} />
          </Column>
        </RibbonPanel>
        <RibbonPanel title="修改" pad={4}>
          <Column $w={59}>
            <Tool icon="move" label="移动" />
            <Tool icon="copy" label="复制" />
            <Tool icon="stretch" label="拉伸" />
          </Column>
          <Column $w={59}>
            <Tool icon="rotate" label="旋转" />
            <Tool icon="mirror" label="镜像" />
            <Tool icon="scale" label="缩放" hover />
          </Column>
          <Column $w={75}>
            <Tool icon="trim" label="修剪" arrow aw={22} />
            <Tool icon="fillet" label="圆角" arrow aw={22} />
            <Tool icon="array" label="阵列" arrow aw={14} />
          </Column>
          <Column $w={29}>
            <Tool icon="erase" />
            <Tool icon="explode" />
            <Tool icon="offset" />
          </Column>
        </RibbonPanel>
        <RibbonPanel title="注释">
          <Large icon="text" label="文字" w={46} arrow />
          <Large icon="dimension" label="标注" w={40} />
          <Column $w={68}>
            <Tool icon="linear" label="线性" arrow />
            <Tool icon="leader" label="引线" arrow />
            <Tool icon="table" label="表格" />
          </Column>
        </RibbonPanel>
        <RibbonPanel title="图层">
          <Large icon="layers" label="图层 特性" w={38} wrap />
          <Column $w={210}>
            <ToolRow>
              <Combo $w={208} $pad={2}>
                <Icon name="bulb" />
                <Icon name="sun" />
                <Icon name="unlock" />
                <Swatch $s={14} $gap={0} $edge="#000" />
                <select aria-label="layer"><option>0</option></select>
                <Caret w={8} />
              </Combo>
            </ToolRow>
            {[['lyOff', 'lyIso', 'lyFreeze', 'lyLock'], ['lyOn', 'lyUniso', 'lyThaw', 'lyUnlock']].map((row, i) => (
              <ToolRow key={row[0]}>
                {row.map((n) => (
                  <IconButton key={n} title={n}><Icon name={n} /></IconButton>
                ))}
                <Tool icon={i ? 'lyMatch' : 'lyCur'} label={i ? '匹配图层' : '置为当前'} />
              </ToolRow>
            ))}
          </Column>
        </RibbonPanel>
        <RibbonPanel title="块">
          <Large icon="insert" label="插入" w={40} arrow />
          <Column $w={91}>
            <Tool icon="create" label="创建" />
            <Tool icon="edit" label="编辑" />
            <Tool icon="attrib" label="编辑属性" arrow aw={14} />
          </Column>
        </RibbonPanel>
        <RibbonPanel title="特性" launcher pad={3}>
          <Large icon="match" label="特性 匹配" w={36} wrap />
          <Column $w={22}>
            <Tool icon="wheel" />
            <Tool icon="weights" />
            <Tool icon="types" />
          </Column>
          <Column $w={182}>
            <ToolRow>
              <Combo $w={180} $pad={10}>
                <Swatch $s={16} $gap={4} $edge="#8a8f98" />
                <select aria-label="color"><option>ByLayer</option></select>
                <Caret w={8} />
              </Combo>
            </ToolRow>
            {['lineweight', 'linetype'].map((n) => (
              <ToolRow key={n}>
                <Combo $w={180} $pad={3}>
                  <LineSample />
                  <select aria-label={n}><option>ByLayer</option></select>
                  <Caret w={8} />
                </Combo>
              </ToolRow>
            ))}
          </Column>
        </RibbonPanel>
        <RibbonPanel title="组">
          <Large icon="group" label="组" w={40} />
          <Column $w={24}>
            <Tool icon="ungroup" />
            <Tool icon="groupEdit" />
            <Tool icon="groupSel" selected />
          </Column>
        </RibbonPanel>
        <RibbonPanel title="实用工具">
          <Large icon="ruler" label="测量" w={48} arrow />
          <Column $w={25}>
            <Tool icon="quick" />
            <Tool icon="selAll" />
            <Tool icon="calc" />
          </Column>
        </RibbonPanel>
        <RibbonPanel title="剪贴板" arrow={false}>
          <Large icon="paste" label="粘贴" w={48} arrow />
          <Column $w={25}>
            <Tool icon="cut" />
            <Tool icon="copyClip" />
          </Column>
        </RibbonPanel>
        <RibbonPanel title="视图" launcher last>
          <Large icon="base" label="基点" w={58} arrow />
        </RibbonPanel>
      </Ribbon>
    </>
  );
}

function Compass() {
  return (
    <ViewCube>
      <svg width="140" height="140" viewBox="0 0 140 140" fontFamily="'Noto Sans CJK SC', sans-serif">
        <circle cx="70" cy="70" r="54" fill="none" stroke="#444b53" strokeWidth="13" />
        <rect x="44" y="44" width="52" height="52" fill="#acaeb1" stroke="#7b7f83" />
        <rect x="54" y="54" width="32" height="32" fill="#9da5ab" />
        <text x="70" y="81" fontSize="30" fontWeight="300" fill="#565f69" textAnchor="middle">上</text>
        <g fontSize="18" fill="#b2b2ac" textAnchor="middle">
          <text x="70" y="21">北</text>
          <text x="13" y="77">西</text>
          <text x="126" y="77">东</text>
          <text x="70" y="134">南</text>
        </g>
      </svg>
      <WcsButton>
        WCS
        <svg width="9" height="5"><path d="M.5.500h8l-4 4z" fill="none" stroke="#c4c6d0" /></svg>
      </WcsButton>
    </ViewCube>
  );
}

const NavItem = styled.button`
  display: flex;
  flex-direction: column;
  align-items: center;
  justify-content: space-between;
  width: 26px;
  height: ${({ $h }) => $h}px;
  margin-top: ${({ $mt }) => $mt || 0}px;
  padding-bottom: 3px;
  border-bottom: ${({ $line }) => ($line ? '1px solid #666b70' : 'none')};
`;

const NavCorner = styled.button`
  position: absolute;
  right: 2px;
  ${({ $side }) => $side}: 1px;
`;

function Navigation() {
  return (
    <NavBar>
      <NavCorner $side="top" aria-label="close navigation bar">
        <svg width="8" height="8"><circle cx="4" cy="4" r="4" fill="#44494f" /><path d="M2 2l4 4M6 2L2 6" stroke="#6a7074" /></svg>
      </NavCorner>
      <NavItem $h={37} $mt={18} $line title="wheel"><Icon name="navWheel" size={23} grid={32} /><Caret w={6} fill="#3e434c" /></NavItem>
      <NavItem $h={28} $mt={4} title="pan"><Icon name="navPan" size={24} grid={32} /></NavItem>
      <NavItem $h={35} title="zoom"><Icon name="navZoom" size={24} grid={32} /><Caret w={6} fill="#3e434c" /></NavItem>
      <NavItem $h={38} $mt={4} $line title="orbit"><Icon name="navOrbit" size={24} grid={32} /><Caret w={6} fill="#3e434c" /></NavItem>
      <NavItem $h={30} $mt={4} title="motion"><Icon name="navMotion" size={24} grid={32} /></NavItem>
      <NavCorner $side="bottom" aria-label="navigation bar options">
        <svg width="8" height="8"><circle cx="4" cy="4" r="4" fill="#44494f" /><path d="M2 4h4" stroke="#6a7074" /></svg>
      </NavCorner>
    </NavBar>
  );
}

const Grip = ({ x, y }) => <rect x={x - 5} y={y - 5} width="10" height="10" fill="#0a7cf5" stroke="#4c5a70" />;

function DrawingArea() {
  return (
    <Canvas>
      <ViewLabel>[−][俯视][二维线框]</ViewLabel>
      <Sketch width="1080" height="400">
        <path d="M255 8.500h40" stroke="#fff" />
        <rect x="331" y="364" width="650" height="5" fill="#2c4b9a" />
        <path d="M331 366.500h650" stroke="#fff" />
        <path d="M977.500 350v33l68-16.500z" fill="#c9dafb" stroke="#fff" strokeDasharray="2 1" />
        <Grip x={330.5} y={366.5} />
        <Grip x={977.5} y={366.5} />
        <Grip x={1047.5} y={366.5} />
        <rect x="646" y="364.500" width="15" height="4" fill="#0a7cf5" stroke="#4c5a70" />
        <rect x="1004" y="364.500" width="15" height="4" fill="#0a7cf5" stroke="#4c5a70" />
      </Sketch>
      <Compass />
      <Navigation />
      <Ucs width="90" height="88" fontFamily="'Noto Sans', sans-serif" fontSize="18" fontWeight="300">
        <path d="M9.500 28v50H60" fill="none" stroke="#fff" />
        <rect x="5.500" y="73.500" width="9" height="9" fill="none" stroke="#fff" />
        <text x="17.500" y="24" textAnchor="middle" fill="#fff">Y</text>
        <text x="70.500" y="77" textAnchor="middle" fill="#fff">X</text>
      </Ucs>
      <CommandArea>
        <History>
          <span>指定基点:</span>
          <span>指定比例因子或 [复制(C)/参照(R)]:</span>
          <span>命令:</span>
        </History>
        <CommandLine>
          <IconButton $w={12} aria-label="drag">
            <svg width="5" height="18"><path d="M1 0v18M4 0v18" stroke="#a4a8ae" strokeWidth="2" strokeDasharray="2 1" /></svg>
          </IconButton>
          <IconButton $w={14} aria-label="close command line">
            <svg width="10" height="10"><path d="M1 1l8 8M9 1L1 9" stroke="#b8bbc0" strokeWidth="2" /></svg>
          </IconButton>
          <IconButton $w={32} aria-label="customize command line">
            <svg width="16" height="16">
              <path d="M2 14l8-8" stroke="#b8bbc0" strokeWidth="2.500" />
              <path d="M9 2l3-1-1 3 2 1 2-2c1 4-2 6-5 5C8 7 8 4 9 2z" fill="#b8bbc0" />
            </svg>
          </IconButton>
          <CommandField>
            <svg width="16" height="13">
              <path d="M.5.500h15v12H.500z" fill="none" stroke="#5b5e62" />
              <path d="M0 0h16v3H0z" fill="#5b5e62" />
              <path d="M2 5l3 2-3 2M6 9.500h4" fill="none" stroke="#5b5e62" />
            </svg>
            <IconButton $w={10} aria-label="recent commands"><Caret w={7} fill="#5b5e62" /></IconButton>
            <input placeholder="键入命令" aria-label="command" />
            <Caret w={7} up fill="#5b5e62" />
          </CommandField>
        </CommandLine>
      </CommandArea>
    </Canvas>
  );
}

const Toggle = ({ name, on }) => (
  <StatusToggle $on={on} aria-pressed={!!on} title={name}>
    <Icon name={name} />
  </StatusToggle>
);
const More = () => (
  <ArrowButton aria-label="more"><Caret w={8} /></ArrowButton>
);

function BottomBar() {
  return (
    <Footer>
      <LayoutTabs>
        <LayoutTab $active>模型</LayoutTab>
        <LayoutTab>布局1</LayoutTab>
        <LayoutTab>布局2</LayoutTab>
        <LayoutTab $plus aria-label="new layout">
          <svg width="8" height="8"><path d="M0 4h8M4 0v8" stroke="#c4c7cb" strokeWidth="2" /></svg>
        </LayoutTab>
      </LayoutTabs>
      <StatusBar>
        <StatusGroup $w={180} $end>1065.6222, 593.2143, 0.0000</StatusGroup>
        <StatusGroup $w={30} $apart><ModelToggle>模型</ModelToggle></StatusGroup>
        <StatusGroup $apart><Toggle name="grid" /><Toggle name="snap" /><More /></StatusGroup>
        <StatusGroup $apart><Toggle name="infer" /></StatusGroup>
        <StatusGroup><Toggle name="dyn" on /></StatusGroup>
        <StatusGroup><Toggle name="ortho" on /></StatusGroup>
        <StatusGroup><Toggle name="polar" /><More /><Toggle name="iso" /><More /></StatusGroup>
        <StatusGroup><Toggle name="track" on /><Toggle name="osnap" on /><More /></StatusGroup>
        <StatusGroup><Toggle name="lineweight" /></StatusGroup>
        <StatusGroup><Toggle name="transp" on /></StatusGroup>
        <StatusGroup><Toggle name="cycle" /></StatusGroup>
        <StatusGroup><Toggle name="osnap3d" /><More /></StatusGroup>
        <StatusGroup $apart><Toggle name="ducs" on /><Toggle name="filter" /><More /><Toggle name="gizmo" on /><More /></StatusGroup>
        <StatusGroup $apart>
          <Toggle name="annoVis" on />
          <Toggle name="annoAuto" />
          <Toggle name="anno" />
          <StatusSelect $w={75}>
            <select aria-label="annotation scale"><option>1:1 / 100%</option></select>
            <Caret w={8} />
          </StatusSelect>
        </StatusGroup>
        <StatusGroup $apart><Toggle name="gear" /><More /></StatusGroup>
        <StatusGroup><Toggle name="plus" /></StatusGroup>
        <StatusGroup $apart>
          <Toggle name="units" />
          <StatusSelect $w={73}>
            <select aria-label="units"><option>小数</option></select>
            <Caret w={8} />
          </StatusSelect>
        </StatusGroup>
        <StatusGroup><Toggle name="props" /></StatusGroup>
        <StatusGroup><Toggle name="lockUi" /><More /></StatusGroup>
        <StatusGroup $apart><Toggle name="isolate" /></StatusGroup>
        <StatusGroup><Toggle name="perf" on /></StatusGroup>
        <StatusGroup $apart><Toggle name="clean" /></StatusGroup>
        <StatusGroup><Toggle name="menu" /></StatusGroup>
      </StatusBar>
    </Footer>
  );
}

function ScaleTooltip() {
  return (
    <Tooltip role="tooltip">
      <strong>缩放</strong>
      <p>放大或缩小选定对象，缩放后保持对象的比例不变</p>
      <p>要缩放对象，请指定基点和比例因子。基点将作为缩放操作的中心，并保持静止。比例因子大于 1 时将放大对象，比例因子介于 0 和 1 之间时将缩小对象。</p>
      <svg width="336" height="208" viewBox="297 284 336 208">
        <path d="M374.500 348.500H438.500V388.500H486.500V348.500H551.500a38 38 0 0 1 0 76H374.500a38 38 0 0 1 0-76z" fill="#fff" stroke="#f00" />
        <path d="M404 361.500h42v27h32v-27h43a25.500 25.500 0 0 1 0 51H404a25.500 25.500 0 0 1 0-51z" fill="#f9f9f9" />
        <rect x="447" y="362" width="31" height="26" fill="#ededed" />
        <g fill="none" stroke="#111" strokeWidth="1.500" strokeDasharray="1.500 5.500">
          <path d="M446.500 388v-26.500H404a25.500 25.500 0 0 0 0 51h117a25.500 25.500 0 0 0 0-51h-42.500V388" />
          <circle cx="403.500" cy="387" r="12" fill="#fff" />
          <circle cx="521.500" cy="387" r="12" fill="#fff" />
        </g>
        <circle cx="374" cy="386.500" r="18" fill="#fff" stroke="#f00" />
        <circle cx="551.500" cy="386.500" r="18" fill="#fff" stroke="#f00" />
        <path d="M438.500 348v40.500h48V348" fill="none" stroke="#f00" />
        <path d="M462 387l131-75" stroke="#222" />
        <path d="M582 312.500h23M593.500 301v23" stroke="#777" />
        <rect x="443.500" y="358.500" width="7" height="7" fill="#fff" stroke="#1fb400" />
        <path d="M462.500 382l4 8h-9z" fill="none" stroke="#f48a3c" strokeWidth="1.200" />
        <rect x="554.500" y="301.500" width="22" height="9" fill="#fff" stroke="#ccc" />
        <g fontFamily="'DejaVu Sans', sans-serif" fontWeight="700">
          <text x="555.500" y="309" fontSize="8" fill="#000">1.50</text>
          <text x="452" y="352" fontSize="12" fill="#1fb400">1</text>
          <text x="465" y="377" fontSize="12" fill="#1fb400">2</text>
        </g>
      </svg>
      <hr />
      <TipCommand>
        <svg width="16" height="16">
          <path d="M.5.500h13v12H.500z" fill="#f3f08c" stroke="#b9b88a" />
          <path d="M0 0h14v2H0z" fill="#1433c8" />
          <path d="M2 10h14v5H2z" fill="#111" />
          <path d="M2 10h2v5H2z" fill="#1433c8" />
        </svg>
        SCALE
      </TipCommand>
      <strong>按 F1 键获得更多帮助</strong>
    </Tooltip>
  );
}

// tail and tip of each red pointer
const pointers = [
  [85, 248, 36, 77],
  [230, 227, 269, 157],
  [752, 748, 755, 641],
];

function Pointer({ p: [x1, y1, x2, y2] }) {
  const len = Math.hypot(x2 - x1, y2 - y1);
  const deg = (Math.atan2(y2 - y1, x2 - x1) * 180) / Math.PI;
  return (
    <g transform={`translate(${x1} ${y1}) rotate(${deg})`} fill="#f00">
      <path d={`M0-1.500H${len - 20}v3H0z`} />
      <path d={`M${len} 0l-27-7 4 7-4 7z`} />
    </g>
  );
}

function App() {
  return (
    <Page>
      <GlobalStyle />
      <Window>
        <Header />
        <RibbonArea />
        <DocTabs>
          <DocTab $w={124}>开始</DocTab>
          <DocTab $w={126} $active>
            Drawing1*
            <svg width="8" height="8"><path d="M1 1l6 6M7 1L1 7" stroke="#9aa0a8" strokeWidth="1.500" /></svg>
          </DocTab>
          <DocTab $w={32}>+</DocTab>
        </DocTabs>
        <DrawingArea />
        <BottomBar />
      </Window>
      <DesktopStrip><DesktopThumb /></DesktopStrip>
      <ScaleTooltip />
      <Ime>
        <div>
          <span>CH</span>
          <svg width="11" height="13"><path d="M5 1c6 2 6 8 1 11H1c5-3 6-6 4-11zM1 5l4 3" fill="none" stroke="#333" /></svg>
          <span>简</span>
        </div>
      </Ime>
      <Watermark>
        <svg width="46" height="42">
          <path d="M2 28C8 8 26 2 44 4 26 6 16 12 14 24c8-8 16-10 20-8C22 16 12 30 2 28z" fill="#2a86cc" />
          <path d="M4 38c20 2 36-4 40-20-4-2-8 0-12 4 2 8-10 14-28 16z" fill="#3c9a3c" />
          <path d="M2 38c8-1 16-3 20-7-2 5-12 9-20 7z" fill="#d6c230" />
        </svg>
        <WatermarkText>
          极光下载站
          <small>www.xz7.com</small>
        </WatermarkText>
      </Watermark>
      <Annotations width="800" height="760">
        {pointers.map((p) => (
          <Pointer key={p[0]} p={p} />
        ))}
        <path d="M329.500 140.500v16l4-3 3 6 3-1-3-6h5z" fill="#fff" stroke="#222" />
      </Annotations>
    </Page>
  );
}

export default App;
